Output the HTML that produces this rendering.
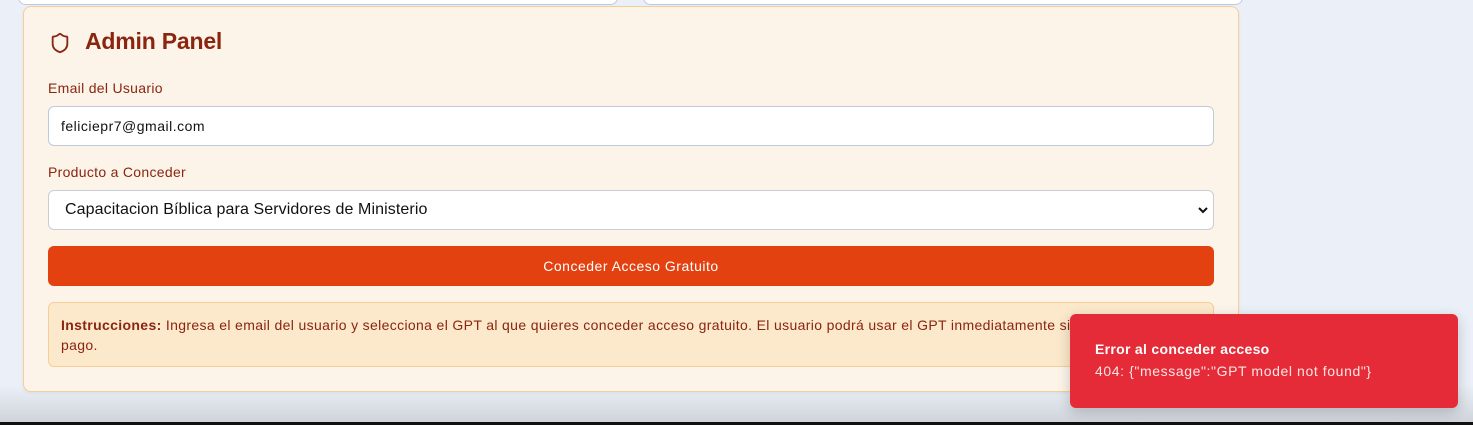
<!DOCTYPE html>
<html><head><meta charset="utf-8"><style>
*{box-sizing:border-box;margin:0;padding:0}
html,body{width:1473px;height:425px;overflow:hidden}
body{background:#ebf0f8;font-family:"Liberation Sans",sans-serif;position:relative}
.shade{position:absolute;left:0;right:0;top:385px;height:38px;background:linear-gradient(#ebf0f8,#cfd3d9)}
.bl{position:absolute;left:0;right:0;top:422px;height:3px;background:#111}
.top{position:absolute;top:-10px;height:15px;background:#fff;border:1px solid #bccbdf;border-radius:8px}
.card{position:absolute;left:23px;top:6px;width:1216px;height:386px;background:#fdf4e9;border:1px solid #f6cf98;border-radius:8px;box-shadow:0 1px 3px rgba(0,0,0,.06)}
h1{position:absolute;left:61px;top:28px;font-size:23px;font-weight:bold;color:#8a2510;letter-spacing:-.2px}
svg.sh{position:absolute;left:49px;top:31px}
.lbl{position:absolute;left:48px;font-size:14px;color:#8a2510;letter-spacing:.3px}
.inp{position:absolute;left:48px;width:1166px;height:40px;background:#fff;border:1px solid #bfcadb;border-radius:6px;font-size:14px;color:#111;padding-left:12px;line-height:38px;letter-spacing:.5px}
.btn{position:absolute;left:48px;top:246px;width:1166px;height:40px;background:#e3410f;border-radius:6px;color:#fff;font-size:14px;text-align:center;line-height:40px;letter-spacing:.5px}
.ins{position:absolute;left:48px;top:302px;width:1166px;height:65px;background:#fce8cb;border:1px solid #f6cf98;border-radius:6px;padding:12px 12px;font-size:14px;line-height:20px;color:#8a2510;letter-spacing:.35px;white-space:nowrap}
.toast{position:absolute;left:1070px;top:314px;width:388px;height:94px;background:#e52b37;border-radius:6px;box-shadow:0 4px 14px rgba(0,0,0,.2);color:#fff;padding:27px 25px;letter-spacing:.6px}
.toast b{display:block;font-size:14px;margin-bottom:6px;letter-spacing:.3px}
.toast span{font-size:14px;color:#fde4e4}
</style></head><body>
<div class="shade"></div><div class="bl"></div>
<div class="top" style="left:18px;width:600px"></div>
<div class="top" style="left:643px;width:600px"></div>
<div class="card"></div>
<svg class="sh" width="22" height="24" viewBox="0 0 24 24" fill="none" stroke="#8a2510" stroke-width="2" stroke-linecap="round" stroke-linejoin="round"><path d="M20 13c0 5-3.5 7.5-7.66 8.950a1 1 0 0 1-.67-.01C7.5 20.5 4 18 4 13V6a1 1 0 0 1 1-1c2 0 4.5-1.2 6.24-2.72a1.17 1.17 0 0 1 1.520 0C14.51 3.81 17 5 19 5a1 1 0 0 1 1 1z"/></svg>
<h1 style="left:85px">Admin Panel</h1>
<div class="lbl" style="top:80px">Email del Usuario</div>
<div class="inp" style="top:106px">feliciepr7@gmail.com</div>
<div class="lbl" style="top:164px">Producto a Conceder</div>
<div class="inp" style="top:190px;font-size:16px;padding-left:16px;border-color:#c9cdd6;letter-spacing:.1px">Capacitacion Bíblica para Servidores de Ministerio
<svg style="position:absolute;right:5px;top:15px" width="10" height="8" viewBox="0 0 10 8"><path d="M1 2l4 4 4-4" stroke="#111" stroke-width="2" fill="none"/></svg></div>
<div class="btn">Conceder Acceso Gratuito</div>
<div class="ins"><b>Instrucciones:</b> Ingresa el email del usuario y selecciona el GPT al que quieres conceder acceso gratuito. El usuario podrá usar el GPT inmediatamente sin necesidad de<br>pago.</div>
<div class="toast"><b>Error al conceder acceso</b><span>404: {"message":"GPT model not found"}</span></div>
</body></html>
